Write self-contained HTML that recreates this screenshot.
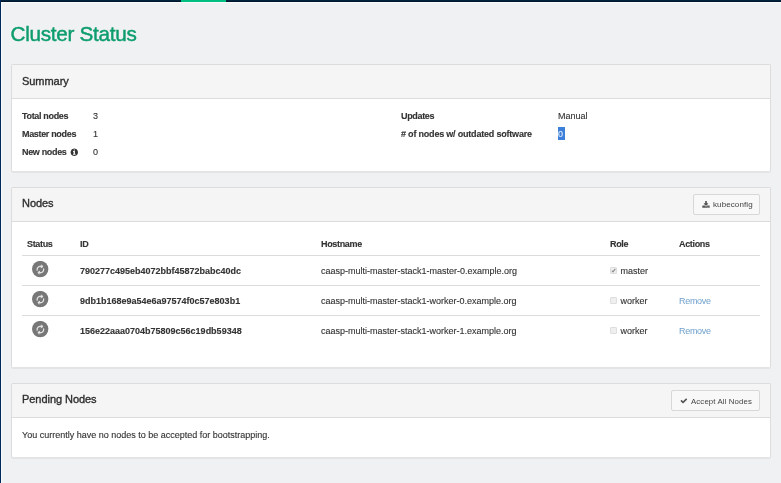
<!DOCTYPE html>
<html><head><meta charset="utf-8">
<style>
*{box-sizing:border-box}
html,body{margin:0;padding:0}
body{width:781px;height:483px;overflow:hidden;background:#eff1f3;font-family:"Liberation Sans",sans-serif;font-size:9px;color:#333;position:relative}
#wrap{position:absolute;left:0;top:0;width:781px;height:483px;will-change:transform}
.tb0{position:absolute;left:0;top:0;width:781px;height:1px;background:#02253f}
.tb1{position:absolute;left:0;top:1px;width:781px;height:1px;background:#00142d}
.tbw{position:absolute;left:1px;top:2px;width:780px;height:1px;background:#fbfcfc}
.topgreen{position:absolute;left:181px;top:0;width:45px;height:2px;background:#00c081}
.leftbar{position:absolute;left:0;top:0;width:1px;height:483px;background:#00295a}
.leftw{position:absolute;left:1px;top:3px;width:1px;height:480px;background:#f9fafb}
h1{position:absolute;left:10.5px;top:21px;margin:0;font-size:20.7px;font-weight:normal;color:#0d9d6c;-webkit-text-stroke:0.45px #0d9d6c;letter-spacing:-0.28px;line-height:26px;white-space:nowrap}
.panel{position:absolute;left:11px;width:760px;background:#fff;border:1px solid #dcdcdc;border-radius:2px;border-bottom-color:#e4e4e4;box-shadow:0 1px 0 rgba(0,0,0,.05)}
.ph{background:#f5f5f5;border-bottom:1px solid #dcdcdc;height:34px;position:relative}
.ph .t{position:absolute;left:10px;font-size:11px;letter-spacing:-0.05px;line-height:14px;color:#2e2e2e;white-space:nowrap;-webkit-text-stroke:0.35px #2e2e2e}
.btn{position:absolute;background:#f8f8f8;border:1px solid #d8d8d8;border-radius:2px;font-size:8px;color:#444;height:21px;white-space:nowrap}
.btn span{position:absolute;line-height:10px;top:5px}
.btn svg{position:absolute}
.abs{position:absolute;white-space:nowrap;line-height:12px;-webkit-text-stroke:0.12px currentColor}
b{font-weight:bold;letter-spacing:-0.33px}
b.id{letter-spacing:0}
.line{position:absolute;left:10px;width:738px;height:1px;background:#dcdcdc}
.ic{position:absolute;width:17px;height:17px}
a{color:#6fa0cc;text-decoration:none;letter-spacing:-0.3px;-webkit-text-stroke:0}
.cb{position:absolute;width:7px;height:7px;border:1px solid #dedede;border-radius:1px;background:#efefef}
</style></head><body>
<div id="wrap"><div class="tb0"></div><div class="tb1"></div><div class="tbw"></div><div class="topgreen"></div><div class="leftbar"></div><div class="leftw"></div>
<h1>Cluster Status</h1>

<div class="panel" style="top:64px;height:108px">
 <div class="ph"><span class="t" style="top:9px">Summary</span></div>
 <span class="abs" style="left:10px;top:44.5px"><b>Total nodes</b></span><span class="abs" style="left:81px;top:44.5px">3</span>
 <span class="abs" style="left:10px;top:62.5px"><b>Master nodes</b></span><span class="abs" style="left:81px;top:62.5px">1</span>
 <span class="abs" style="left:10px;top:80.5px"><b>New nodes</b></span><span class="abs" style="left:81px;top:80.5px">0</span>
 <svg style="position:absolute;left:57.7px;top:82.8px" width="8.6" height="8.6" viewBox="0 0 1792 1792"><path fill="#333" d="M1152 1376v-160q0-14-9-23t-23-9h-96v-512q0-14-9-23t-23-9h-320q-14 0-23 9t-9 23v160q0 14 9 23t23 9h96v320h-96q-14 0-23 9t-9 23v160q0 14 9 23t23 9h448q14 0 23-9t9-23zm-128-896v-160q0-14-9-23t-23-9h-192q-14 0-23 9t-9 23v160q0 14 9 23t23 9h192q14 0 23-9t9-23zm640 416q0 209-103 385.500t-279.500 279.500-385.500 103-385.500-103-279.500-279.500-103-385.500 103-385.500 279.500-279.500 385.500-103 385.500 103 279.500 279.500 103 385.500z"/></svg>
 <span class="abs" style="left:389px;top:44.500px"><b>Updates</b></span><span class="abs" style="left:546px;top:44.500px">Manual</span>
 <span class="abs" style="left:389px;top:62.500px"><b style="letter-spacing:-0.2px"># of nodes w/ outdated software</b></span>
 <div style="position:absolute;left:546px;top:62px;width:7px;height:13px;background:#3d80da;overflow:hidden"><span class="abs" style="left:0;top:0.5px;color:#dfe9f8">0</span></div>
</div>

<div class="panel" style="top:187px;height:181px">
 <div class="ph"><span class="t" style="top:8px">Nodes</span>
  <div class="btn" style="left:681px;top:6px;width:67px"><svg style="left:8px;top:6px" width="8" height="8" viewBox="0 0 1792 1792"><path fill="#555" d="M1344 1344q0-26-19-45t-45-19-45 19-19 45 19 45 45 19 45-19 19-45zm256 0q0-26-19-45t-45-19-45 19-19 45 19 45 45 19 45-19 19-45zm128-224v320q0 40-28 68t-68 28h-1472q-40 0-68-28t-28-68v-320q0-40 28-68t68-28h465l135 136q58 56 136 56t136-56l136-136h464q40 0 68 28t28 68zm-325-569q17 41-14 70l-448 448q-18 19-45 19t-45-19l-448-448q-31-29-14-70 17-39 59-39h256v-448q0-26 19-45t45-19h256q26 0 45 19t19 45v448h256q42 0 59 39z"/></svg><span style="left:19px;letter-spacing:0.1px">kubeconfig</span></div>
 </div>
 <span class="abs" style="left:15px;top:50px"><b>Status</b></span>
 <span class="abs" style="left:68px;top:50px"><b>ID</b></span>
 <span class="abs" style="left:309px;top:50px"><b>Hostname</b></span>
 <span class="abs" style="left:598px;top:50px"><b>Role</b></span>
 <span class="abs" style="left:667px;top:50px"><b>Actions</b></span>
 <div class="line" style="top:67px"></div>
 <div class="line" style="top:97px"></div>
 <div class="line" style="top:127px"></div>

 <svg class="ic" style="left:20px;top:73px" viewBox="0 0 17 17"><circle cx="8.2" cy="8.1" r="8.2" fill="#777"/><g transform="translate(8.4,8.5) rotate(-32) scale(0.0051) translate(-768,-768)"><path fill="#e2e2e2" d="M1511 928q0 5-1 7-64 268-268 434.500t-478 166.500q-146 0-282.500-55t-243.500-157l-129 129q-19 19-45 19t-45-19-19-45v-448q0-26 19-45t45-19h448q26 0 45 19t19 45-19 45l-137 137q71 66 161 102t187 36q134 0 250-65t186-179q11-17 53-117 8-23 30-23h192q13 0 22.500 9.500t9.500 22.500zm25-800v448q0 26-19 45t-45 19h-448q-26 0-45-19t-19-45 19-45l138-138q-148-137-349-137-134 0-250 65t-186 179q-11 17-53 117-8 23-30 23h-199q-13 0-22.500-9.500t-9.500-22.500v-7q65-268 270-434.500t480-166.500q146 0 284 55.500t245 156.500l130-129q19-19 45-19t45 19 19 45z"/></g></svg>
 <span class="abs" style="left:68px;top:77px"><b class="id">790277c495eb4072bbf45872babc40dc</b></span>
 <span class="abs" style="left:309px;top:77px">caasp-multi-master-stack1-master-0.example.org</span>
 <div class="cb" style="left:598px;top:79px"><svg style="position:absolute;left:0;top:0" width="5" height="5" viewBox="0 0 5 5"><path d="M0.800 2.600 L2 3.800 L4.300 0.900" stroke="#8c8c8c" stroke-width="1.15" fill="none"/></svg></div>
 <span class="abs" style="left:608.5px;top:77px">master</span>

 <svg class="ic" style="left:20px;top:103px" viewBox="0 0 17 17"><circle cx="8.2" cy="8.1" r="8.2" fill="#777"/><g transform="translate(8.4,8.5) rotate(-32) scale(0.0051) translate(-768,-768)"><path fill="#e2e2e2" d="M1511 928q0 5-1 7-64 268-268 434.500t-478 166.500q-146 0-282.500-55t-243.500-157l-129 129q-19 19-45 19t-45-19-19-45v-448q0-26 19-45t45-19h448q26 0 45 19t19 45-19 45l-137 137q71 66 161 102t187 36q134 0 250-65t186-179q11-17 53-117 8-23 30-23h192q13 0 22.500 9.500t9.500 22.500zm25-800v448q0 26-19 45t-45 19h-448q-26 0-45-19t-19-45 19-45l138-138q-148-137-349-137-134 0-250 65t-186 179q-11 17-53 117-8 23-30 23h-199q-13 0-22.500-9.500t-9.500-22.500v-7q65-268 270-434.500t480-166.500q146 0 284 55.500t245 156.500l130-129q19-19 45-19t45 19 19 45z"/></g></svg>
 <span class="abs" style="left:68px;top:107px"><b class="id">9db1b168e9a54e6a97574f0c57e803b1</b></span>
 <span class="abs" style="left:309px;top:107px">caasp-multi-master-stack1-worker-0.example.org</span>
 <div class="cb" style="left:598px;top:109px"></div>
 <span class="abs" style="left:608.5px;top:107px">worker</span>
 <span class="abs" style="left:667px;top:107px"><a>Remove</a></span>

 <svg class="ic" style="left:20px;top:133px" viewBox="0 0 17 17"><circle cx="8.2" cy="8.1" r="8.2" fill="#777"/><g transform="translate(8.4,8.5) rotate(-32) scale(0.0051) translate(-768,-768)"><path fill="#e2e2e2" d="M1511 928q0 5-1 7-64 268-268 434.500t-478 166.500q-146 0-282.500-55t-243.500-157l-129 129q-19 19-45 19t-45-19-19-45v-448q0-26 19-45t45-19h448q26 0 45 19t19 45-19 45l-137 137q71 66 161 102t187 36q134 0 250-65t186-179q11-17 53-117 8-23 30-23h192q13 0 22.500 9.500t9.500 22.500zm25-800v448q0 26-19 45t-45 19h-448q-26 0-45-19t-19-45 19-45l138-138q-148-137-349-137-134 0-250 65t-186 179q-11 17-53 117-8 23-30 23h-199q-13 0-22.500-9.500t-9.500-22.500v-7q65-268 270-434.500t480-166.500q146 0 284 55.500t245 156.500l130-129q19-19 45-19t45 19 19 45z"/></g></svg>
 <span class="abs" style="left:68px;top:137px"><b class="id">156e22aaa0704b75809c56c19db59348</b></span>
 <span class="abs" style="left:309px;top:137px">caasp-multi-master-stack1-worker-1.example.org</span>
 <div class="cb" style="left:598px;top:139px"></div>
 <span class="abs" style="left:608.5px;top:137px">worker</span>
 <span class="abs" style="left:667px;top:137px"><a>Remove</a></span>
</div>

<div class="panel" style="top:383px;height:75px">
 <div class="ph"><span class="t" style="top:8px">Pending Nodes</span>
  <div class="btn" style="left:659px;top:6px;width:89px"><svg style="left:8px;top:6.4px" width="7.6" height="7.6" viewBox="0 0 1792 1792"><path fill="#555" d="M1671 566q0 40-28 68l-724 724-136 136q-28 28-68 28t-68-28l-136-136-362-362q-28-28-28-68t28-68l136-136q28-28 68-28t68 28l294 295 656-657q28-28 68-28t68 28l136 136q28 28 28 68z"/></svg><span style="left:19px;top:5.6px;font-size:7.8px;letter-spacing:0.13px">Accept All Nodes</span></div>
 </div>
 <span class="abs" style="left:10px;top:45px">You currently have no nodes to be accepted for bootstrapping.</span>
</div>
</div></body></html>
